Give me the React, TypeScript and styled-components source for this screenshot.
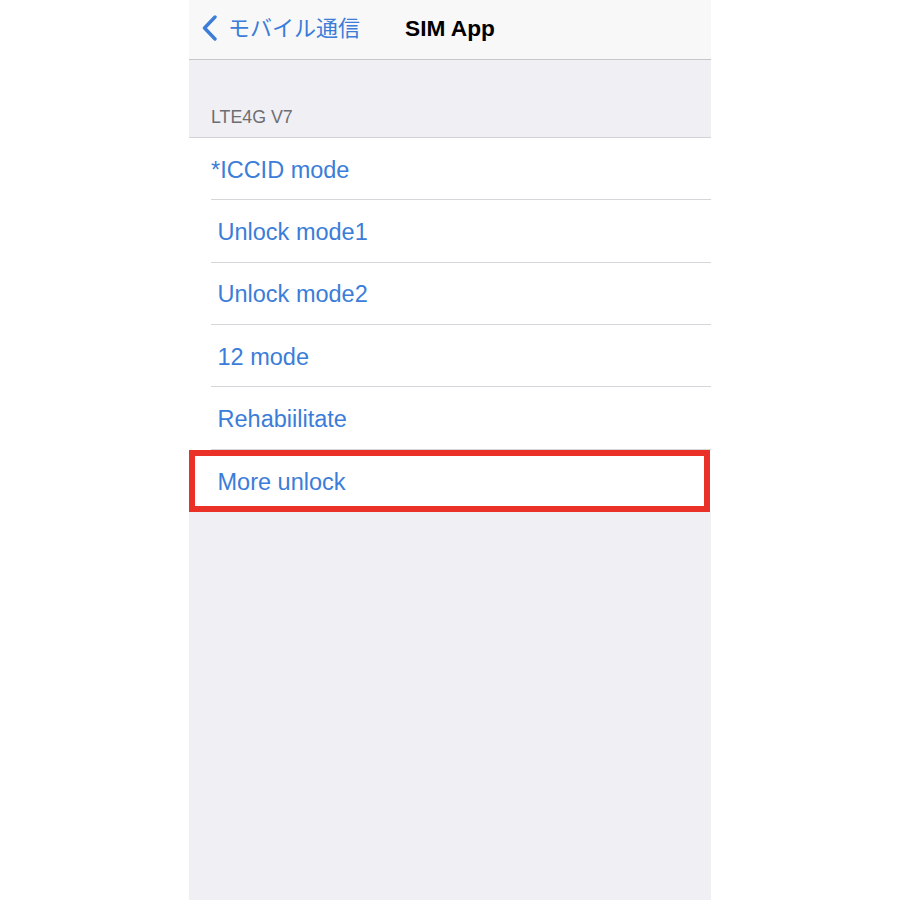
import React from "react";
import styled, { createGlobalStyle } from "styled-components";

const Global = createGlobalStyle`
  html, body { margin: 0; padding: 0; background: #ffffff; }
  body { font-family: "Liberation Sans", Arial, "Noto Sans CJK JP", sans-serif; }
`;

const Phone = styled.div`
  width: 522px;
  min-height: 900px;
  margin: 0 auto;
  background: #efeff4;
  display: flex;
  flex-direction: column;
`;

const NavBar = styled.header`
  height: 59px;
  background: #f8f8f9;
  border-bottom: 1px solid #c6c6c9;
  display: grid;
  grid-template-columns: 1fr auto 1fr;
  align-items: center;
`;

const BackButton = styled.div`
  display: flex;
  align-items: center;
  gap: 10px;
  padding-left: 13px;
  padding-bottom: 3px;
  color: #3b7dd8;
  font-family: "Noto Sans CJK JP", sans-serif;
  font-size: 22px;
  line-height: 1;
`;

const BackLabel = styled.span`
  margin-bottom: 4px;
`;

const Title = styled.div`
  font-family: "Liberation Sans", Arial, sans-serif;
  font-weight: 700;
  font-size: 22.7px;
  color: #000000;
  padding-bottom: 3px;
`;

const SectionHeader = styled.div`
  height: 77px;
  display: flex;
  align-items: flex-end;
  padding: 0 0 9px 22px;
  box-sizing: border-box;
  font-size: 17.8px;
  line-height: 22px;
  color: #6d6d72;
`;

const List = styled.div`
  background: #ffffff;
  border-top: 1px solid #d2d2d6;
  display: flex;
  flex-direction: column;
`;

const Row = styled.div<{ $last?: boolean }>`
  position: relative;
  height: 62.33px;
  box-sizing: border-box;
  margin-left: 22px;
  padding-top: 3px;
  display: flex;
  align-items: center;
  border-bottom: ${(p) => (p.$last ? "none" : "1px solid #d6d6da")};
  color: #3b7dd8;
  font-size: 23.5px;
  white-space: pre;
`;

const Highlight = styled.div`
  position: absolute;
  top: 0;
  bottom: 0;
  left: -22px;
  right: 1px;
  border: 6px solid #ea3128;
  pointer-events: none;
`;

const items = [
  "*ICCID mode",
  " Unlock mode1",
  " Unlock mode2",
  " 12 mode",
  " Rehabiilitate",
  " More unlock",
];

export default function App() {
  return (
    <>
      <Global />
      <Phone>
        <NavBar>
          <BackButton>
            <svg width="16" height="26" viewBox="0 0 16 26">
              <polyline
                points="13,2 2.5,13 13,24"
                fill="none"
                stroke="#3b7dd8"
                strokeWidth="3.4"
                strokeLinecap="round"
                strokeLinejoin="round"
              />
            </svg>
            <BackLabel>モバイル通信</BackLabel>
          </BackButton>
          <Title>SIM App</Title>
          <div />
        </NavBar>
        <SectionHeader>LTE4G V7</SectionHeader>
        <List>
          {items.map((t, i) => {
            const last = i === items.length - 1;
            return (
              <Row key={t} $last={last}>
                {t}
                {last && <Highlight />}
              </Row>
            );
          })}
        </List>
      </Phone>
    </>
  );
}
